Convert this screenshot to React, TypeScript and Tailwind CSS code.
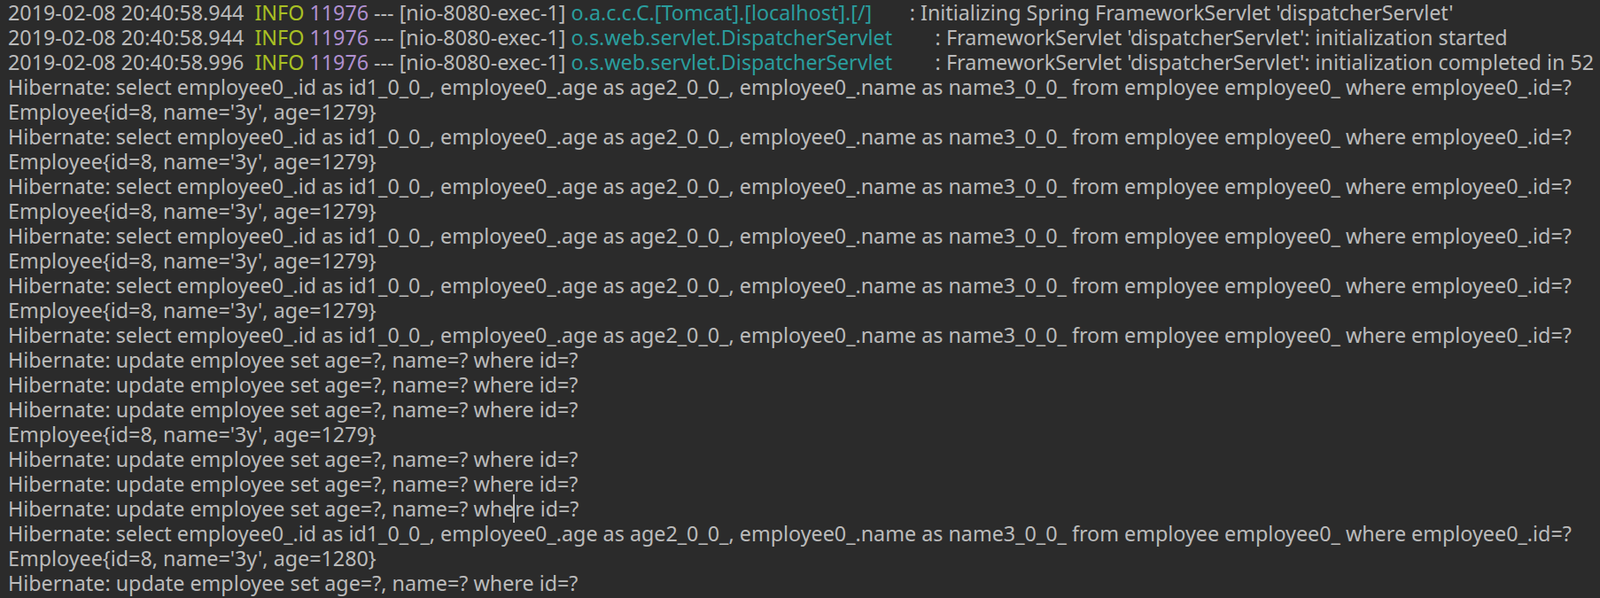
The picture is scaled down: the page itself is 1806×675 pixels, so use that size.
const sel =
  "Hibernate: select employee0_.id as id1_0_0_, employee0_.age as age2_0_0_, employee0_.name as name3_0_0_ from employee employee0_ where employee0_.id=?";
const upd = "Hibernate: update employee set age=?, name=? where id=?";
const emp = (n: number) => `Employee{id=8, name='3y', age=${n}}`;

const springLines = [
  ["58.944", "o.a.c.c.C.[Tomcat].[localhost].[/]      ", "Initializing Spring FrameworkServlet 'dispatcherServlet'"],
  ["58.944", "o.s.web.servlet.DispatcherServlet       ", "FrameworkServlet 'dispatcherServlet': initialization started"],
  ["58.996", "o.s.web.servlet.DispatcherServlet       ", "FrameworkServlet 'dispatcherServlet': initialization completed in 52 ms"],
];

const plain = [
  sel, emp(1279), sel, emp(1279), sel, emp(1279), sel, emp(1279), sel, emp(1279), sel,
  upd, upd, upd, emp(1279), upd, upd, "CURSOR", sel, emp(1280), upd,
];

export default function App() {
  return (
    <div className="w-[1806px] h-[675px] overflow-hidden bg-[#2b2b2b] pl-[9px] font-['Liberation_Mono'] text-[23.3px] leading-[28px] text-[#bbbbbb] whitespace-pre">
      {springLines.map(([ms, logger, msg], i) => (
        <div key={i}>
          {`2019-02-08 20:40:${ms}  `}
          <span className="text-[#a8c023]">INFO</span>{" "}
          <span className="text-[#b090d0]">11976</span>
          {" --- [nio-8080-exec-1] "}
          <span className="text-[#2a9d9d]">{logger}</span>
          {" : " + msg}
        </div>
      ))}
      {plain.map((l, i) =>
        l === "CURSOR" ? (
          <div key={i}>
            {"Hibernate: update employee set age=?, name=? whe"}
            <span className="border-l-2 border-[#bbbbbb] -ml-px">r</span>
            {"e id=?"}
          </div>
        ) : (
          <div key={i}>{l}</div>
        )
      )}
    </div>
  );
}
